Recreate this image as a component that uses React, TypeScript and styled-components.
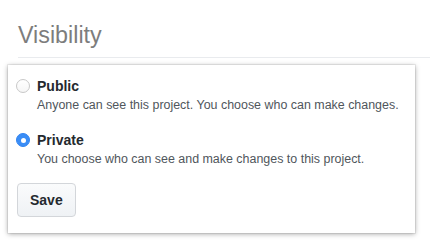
import React, { useState } from "react";
import styled, { createGlobalStyle } from "styled-components";

const Global = createGlobalStyle`
  html, body { margin: 0; padding: 0; background: #ffffff; }
  body { font-family: "Liberation Sans", Arial, Helvetica, sans-serif; -webkit-font-smoothing: antialiased; }
  * { box-sizing: border-box; }
`;

const Page = styled.div`
  width: 430px;
  height: 246px;
  overflow: hidden;
  background: #fff;
`;

const Subhead = styled.div`
  margin-left: 18px;
  padding-top: 20px;
  padding-bottom: 7px;
  border-bottom: 1px solid #e9ebee;
`;

const Heading = styled.h2`
  margin: 0;
  font-size: 23.3px;
  line-height: 30px;
  font-weight: 400;
  color: #7d7d7d;
`;

const Card = styled.form`
  margin: 7px 0 0 8px;
  width: 407px;
  padding: 11px 8px 16px 8px;
  background: #fff;
  box-shadow: 0 0 0 1px rgba(0, 0, 0, 0.06), 0 1px 5px rgba(0, 0, 0, 0.35);
  display: flex;
  flex-direction: column;
`;

const Option = styled.label<{ $first?: boolean }>`
  display: grid;
  grid-template-columns: 14px 1fr;
  column-gap: 7px;
  margin-top: ${(p) => (p.$first ? "0" : "16px")};
  cursor: pointer;
`;

const Radio = styled.span<{ $checked: boolean }>`
  width: 14px;
  height: 14px;
  margin-top: 3px;
  border-radius: 50%;
  display: flex;
  align-items: center;
  justify-content: center;
  background: ${(p) => (p.$checked ? "#3a8df6" : "linear-gradient(#ffffff, #f6f6f6)")};
  border: 1px solid ${(p) => (p.$checked ? "#3385f0" : "#c8c8c8")};
  &::after {
    content: "";
    width: 5px;
    height: 5px;
    border-radius: 50%;
    background: #fff;
    display: ${(p) => (p.$checked ? "block" : "none")};
  }
`;

const Title = styled.span`
  font-size: 14px;
  line-height: 20px;
  font-weight: 700;
  color: #24292e;
`;

const Note = styled.span`
  grid-column: 2;
  font-size: 12.45px;
  line-height: 18px;
  white-space: nowrap;
  color: #50565c;
`;

const Button = styled.button`
  align-self: flex-start;
  margin-top: 15px;
  margin-left: 1px;
  height: 34px;
  padding: 0 12px;
  font-family: inherit;
  font-size: 14px;
  font-weight: 700;
  color: #24292e;
  background: linear-gradient(#fafbfc, #eff2f5);
  border: 1px solid #d3d6da;
  border-radius: 4px;
  cursor: pointer;
`;

const options = [
  { id: "public", title: "Public", note: "Anyone can see this project. You choose who can make changes." },
  { id: "private", title: "Private", note: "You choose who can see and make changes to this project." },
];

export default function App() {
  const [value, setValue] = useState("private");
  return (
    <Page>
      <Global />
      <Subhead>
        <Heading>Visibility</Heading>
      </Subhead>
      <Card onSubmit={(e) => e.preventDefault()}>
        {options.map((o, i) => (
          <Option key={o.id} $first={i === 0} onClick={() => setValue(o.id)}>
            <Radio $checked={value === o.id} />
            <Title>{o.title}</Title>
            <Note>{o.note}</Note>
          </Option>
        ))}
        <Button type="submit">Save</Button>
      </Card>
    </Page>
  );
}
